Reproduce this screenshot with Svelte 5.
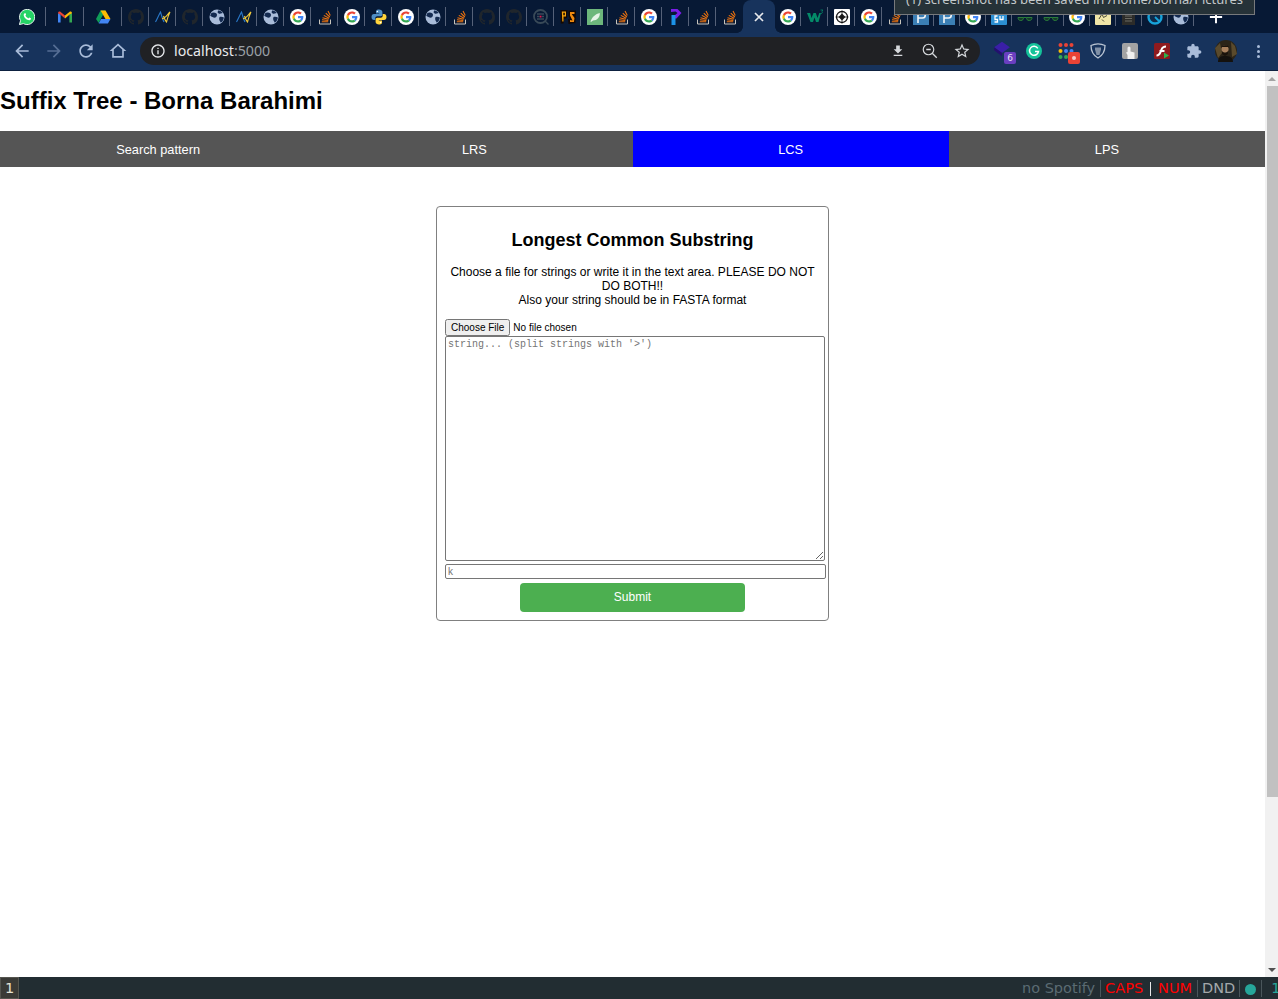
<script>
  const tabs = [
    ['whatsapp',38],['gmail',38],['drive',38],['github',27],['nu',27],['github',27],['globe',27],['nu',27],['globe',27],['google',27],
    ['so',27],['google',27],['python',27],['google',27],['globe',27],['so',27],['github',27],['github',27],['quant',27],['ps',27],
    ['leaf',27],['so',27],['google',27],['purple',27],['so',27],['so',27],['active',32,true],['google',26],['w3',27],['cube',27],
    ['google',27],['so',26],['p',26],['p',26],['google',26],['gu',26],['glasses',26],['glasses',26],['google',26],['note',26],
    ['doc',26],['ring',26],['globe',26]
  ];
  const tabItems = tabs.map(([kind, width, active]) => ({ kind, width, active }));
</script>

{#snippet favicon(kind)}
  {#if kind === 'active'}
    <svg class="fav" viewBox="0 0 16 16"><path d="M4 4l8 8M12 4l-8 8" stroke="#e8eaed" stroke-width="1.700" fill="none"/></svg>
  {:else if kind === 'whatsapp'}
    <svg class="fav" viewBox="0 0 16 16"><path d="M.4 15.600l1.100-3.900A7.600 7.600 0 1 1 4.400 14.600z" fill="#25d366" stroke="#fff" stroke-width=".9"/><path d="M5.700 4.200c-.9.5-1.200 1.600-.8 2.700.7 2 2.200 3.400 4.200 4.200 1.100.4 2.300 0 2.700-.9.2-.5.2-.9.1-1l-1.700-.8-.8 1c-1.300-.5-2.300-1.400-3-2.800l.7-.8-.7-1.800z" fill="#fff"/></svg>
  {:else if kind === 'gmail'}
    <svg class="fav" viewBox="0 0 16 16"><path d="M1 13.500V4l2.600 1.700v7.800z" fill="#4285f4"/><path d="M12.400 13.500V5.700L15 4v9.500z" fill="#34a853"/><path d="M1 4.200C1 2.800 2.500 2 3.600 2.900L8 6.400l-.1 3-4.300-3.600z" fill="#ea4335"/><path d="M8 6.400l4.400-3.500c1.100-.9 2.600-.1 2.600 1.300l-2.600 1.600L8 9.400z" fill="#fbbc05"/></svg>
  {:else if kind === 'drive'}
    <svg class="fav" viewBox="0 0 16 16"><path d="M5.500 1.500h5L6 9.500l-2.300 4.500L1 10z" fill="#0f9d58"/><path d="M5.500 1.500h5l5 8.500h-5z" fill="#fbbc04"/><path d="M3.700 14.500L6 10h9.500l-2.600 4.500z" fill="#4285f4"/></svg>
  {:else if kind === 'github'}
    <svg class="fav" viewBox="0 0 16 16"><path d="M8 0C3.580 0 0 3.580 0 8c0 3.540 2.290 6.530 5.470 7.590.4.070.55-.17.55-.38 0-.19-.01-.82-.01-1.490-2.010.37-2.530-.49-2.690-.94-.09-.23-.48-.94-.82-1.130-.28-.15-.68-.52-.01-.53.63-.01 1.080.58 1.230.82.72 1.210 1.870.87 2.330.66.07-.52.28-.87.51-1.070-1.780-.2-3.640-.89-3.640-3.950 0-.87.31-1.590.82-2.150-.08-.2-.36-1.020.08-2.120 0 0 .67-.21 2.200.82.64-.18 1.320-.27 2-.27.68 0 1.360.09 2 .27 1.530-1.040 2.200-.82 2.200-.82.44 1.100.16 1.920.08 2.120.51.56.82 1.270.82 2.150 0 3.070-1.870 3.750-3.650 3.950.29.25.54.73.54 1.480 0 1.070-.01 1.930-.01 2.200 0 .21.15.46.55.38A8.013 8.013 0 0 0 16 8c0-4.420-3.580-8-8-8z" fill="#20262c"/></svg>
  {:else if kind === 'nu'}
    <svg class="fav" viewBox="0 0 16 16"><path d="M.5 13C2.500 9.500 4 5.500 5.500 3c1 3.500 2 7 3.500 10" stroke="#2a78c8" stroke-width="1.100" fill="none"/><path d="M7 9.500C9.500 10.500 12 6 15 3c-1.500 3-2.500 6-3.500 10-1-1-2-3-3-6" stroke="#f0c93a" stroke-width="1.100" fill="none"/></svg>
  {:else if kind === 'globe'}
    <svg class="fav" viewBox="0 0 16 16"><circle cx="8" cy="8" r="7.500" fill="#a9bcd9"/><path d="M2.200 4.200C3.500 3 6 3.200 7.500 4.500 8.500 5.800 8 7.500 6.500 8.500 5 9 3 8 1.200 6.800zM9.500 1.200c1.800.4 3.300 1.400 4.300 2.800l-3 .8c-1 0-2-.8-2.300-1.800zM10.500 8c1.500-.5 3.300-.2 4.400.6-.2 2.300-1.400 4-3 5.100-1-1.200-2.500-3.500-1.400-5.700z" fill="#132a50"/></svg>
  {:else if kind === 'google'}
    <svg class="fav" viewBox="0 0 16 16"><circle cx="8" cy="8" r="8" fill="#fff"/><g transform="translate(2.400 2.400) scale(.233)"><path fill="#EA4335" d="M24 9.500c3.540 0 6.710 1.220 9.210 3.600l6.850-6.850C35.900 2.380 30.470 0 24 0 14.620 0 6.510 5.380 2.560 13.220l7.980 6.190C12.430 13.720 17.740 9.500 24 9.500z"/><path fill="#4285F4" d="M46.980 24.550c0-1.570-.15-3.090-.38-4.550H24v9.020h12.940c-.58 2.960-2.260 5.480-4.780 7.180l7.730 6c4.510-4.180 7.090-10.360 7.090-17.650z"/><path fill="#FBBC05" d="M10.530 28.590c-.48-1.450-.76-2.990-.76-4.590s.27-3.140.76-4.590l-7.980-6.190C.92 16.460 0 20.120 0 24c0 3.880.92 7.540 2.560 10.780l7.970-6.190z"/><path fill="#34A853" d="M24 48c6.480 0 11.930-2.130 15.890-5.810l-7.730-6c-2.150 1.450-4.920 2.300-8.160 2.300-6.260 0-11.570-4.220-13.470-9.910l-7.980 6.190C6.510 42.620 14.620 48 24 48z"/></g></svg>
  {:else if kind === 'so'}
    <svg class="fav" viewBox="0 0 16 16"><path d="M2.500 10.500v4.500h11v-4.500" stroke="#c8c4bc" stroke-width="1" fill="none"/><path d="M4.800 12.800h6.400M5 10.800l6.300.6M5.500 8.700l6.100 1.600M6.800 6.400l5.400 2.900M8.800 4.200l4 3.800M11 2l2.300 4.600" stroke="#f2740d" stroke-width="1.050" fill="none"/></svg>
  {:else if kind === 'python'}
    <svg class="fav" viewBox="0 0 16 16"><path d="M8 .5C5 .5 5 2 5 3v1.500h3.200V5H3C1.500 5 .5 6.200.5 8S1.500 11 3 11h1.300V9.200C4.300 8 5.200 7.300 6.300 7.300h3.400c1 0 1.700-.8 1.700-1.700V3c0-1.500-1.500-2.500-3.400-2.500z" fill="#4f8fc6"/><path d="M8 15.500c3 0 3-1.500 3-2.500v-1.500H7.800V11H13c1.500 0 2.500-1.200 2.500-3S14.500 5 13 5h-1.300v1.800c0 1.200-.9 1.900-2 1.900H6.300c-1 0-1.700.8-1.700 1.700V13c0 1.500 1.500 2.500 3.400 2.500z" fill="#ffd43b"/><circle cx="6.400" cy="2.500" r=".7" fill="#fff"/><circle cx="9.600" cy="13.500" r=".7" fill="#fff"/></svg>
  {:else if kind === 'quant'}
    <svg class="fav" viewBox="0 0 16 16"><circle cx="7.500" cy="7.500" r="6.500" fill="none" stroke="#394a58" stroke-width="1.800"/><path d="M4 5h7M4 7.500h2.500M9 7.500h2M4 10h7M12 12l3.500 3.500" stroke="#394a58" stroke-width="1.400"/><rect x="6.700" y="6.700" width="1.800" height="1.800" fill="#e8174a"/></svg>
  {:else if kind === 'ps'}
    <svg class="fav" viewBox="0 0 16 16"><path d="M.5 1h7l-.5 8-3 1-.5 4.500H.8zM8.500 1.500H16l-.5 12.500-7 1-.5-5 2 .5-1.500-4z" fill="#140802"/><path d="M1.800 2.500h4.200v5H3.500v5H2.300zM3.300 3.700v2.500h1.500V3.700z" fill="#f5a30c" fill-rule="evenodd"/><path d="M10 3h4.500v2h-2.800l2.800 4-.6 4H10v-2l2.500.5-2.500-5z" fill="#ef8a0e"/></svg>
  {:else if kind === 'leaf'}
    <svg class="fav" viewBox="0 0 16 16"><rect width="16" height="16" fill="#6db77c"/><path d="M3.500 12.500C5 8 8.500 5 12.800 4c.2 4.200-2.500 7.500-6.800 7.500l-2 1.500z" fill="#e6f3e8"/></svg>
  {:else if kind === 'purple'}
    <svg class="fav" viewBox="0 0 16 16"><path d="M3 0l6.500 0 4 4-5 5.500H6V7L9.500 4 7.500 2.500 3 3z" fill="#7a1de8"/><path d="M3.500 6h4v10h-4z" fill="#1c93e8"/></svg>
  {:else if kind === 'w3'}
    <svg class="fav" viewBox="0 0 16 16"><path d="M0 4h3.200l1.300 5L6.500 4h2.300l1.700 5L12.300 4h1.700l-2.500 9H9L7.500 8.500 6 13H3.500z" fill="#048a68"/><path d="M13.500 1H16l-1.200 1.200c1 .5.8 2.300-.8 2.300" stroke="#048a68" stroke-width=".8" fill="none"/></svg>
  {:else if kind === 'cube'}
    <svg class="fav" viewBox="0 0 16 16"><rect width="16" height="16" rx="1" fill="#fff"/><circle cx="8" cy="8" r="5.500" fill="none" stroke="#111" stroke-width="1.300"/><path d="M8 4.500L11.500 8 8 11.500 4.500 8z" fill="#222"/><path d="M8 1.500v13M1.500 8h13" stroke="#111" stroke-width=".7"/></svg>
  {:else if kind === 'p'}
    <svg class="fav" viewBox="0 0 16 16"><rect width="16" height="16" fill="#3b7fb5"/><path d="M5 14V3.500h4.500a2.700 2.700 0 0 1 0 5.500H5" fill="none" stroke="#f3f6f8" stroke-width="1.600"/></svg>
  {:else if kind === 'gu'}
    <svg class="fav" viewBox="0 0 16 16"><rect width="16" height="16" rx="1" fill="#2b8fd3"/><path d="M6.500 7H4v3.500h2.500v2.500H3.500M9 7v3.500h3V7" fill="none" stroke="#fff" stroke-width="1.300"/></svg>
  {:else if kind === 'glasses'}
    <svg class="fav" viewBox="0 0 16 16"><path d="M1 8.500h5.500c0 2-1 3-2.700 3S1 10.500 1 8.500zM9.500 8.500H15c0 2-1 3-2.800 3s-2.700-1-2.700-3zM6.500 8.500h3" fill="#173a2a" stroke="#2b7d3a" stroke-width="1"/></svg>
  {:else if kind === 'note'}
    <svg class="fav" viewBox="0 0 16 16"><rect width="16" height="16" rx="1" fill="#f0e6a8"/><path d="M4 10l3-5 1.500 3.500L12 6.500M7 10.500l2 2" stroke="#4a4a3a" stroke-width="1" fill="none"/></svg>
  {:else if kind === 'doc'}
    <svg class="fav" viewBox="0 0 16 16"><rect x="1" width="13" height="16" fill="#2c2c29"/><path d="M4 7h7M4 9.500h7M4 12h7" stroke="#6b6b62" stroke-width="1"/></svg>
  {:else if kind === 'ring'}
    <svg class="fav" viewBox="0 0 16 16"><circle cx="8" cy="8" r="6.500" fill="#0f2a49" stroke="#17a3da" stroke-width="2.400"/><path d="M8 8l4 4" stroke="#17a3da" stroke-width="1.800"/></svg>
  {/if}
{/snippet}

<div class="screen">
  <header class="chrome">
    <div class="tabstrip">
      {#each tabItems as tab}
        <div class={['tab', tab.active && 'active', `w${tab.width}`]}>
          {@render favicon(tab.kind)}
        </div>
      {/each}
      <svg class="newtab" viewBox="0 0 16 16"><path d="M8 1v14M1 8h14" stroke="#fff" stroke-width="2.200"/></svg>
    </div>
    <div class="toast">(1) screenshot has been saved in /home/borna/Pictures</div>

    <div class="toolbar">
      <div class="navbtn"><svg viewBox="0 0 24 24"><path class="nav" d="M20 11H7.830l5.590-5.590L12 4l-8 8 8 8 1.410-1.410L7.830 13H20v-2z"/></svg></div>
      <div class="navbtn"><svg viewBox="0 0 24 24"><path class="navoff" d="M4 11h12.170l-5.590-5.590L12 4l8 8-8 8-1.410-1.410L16.170 13H4v-2z"/></svg></div>
      <div class="navbtn"><svg viewBox="0 0 24 24"><path class="nav" d="M17.650 6.350C16.200 4.900 14.210 4 12 4c-4.420 0-7.990 3.580-7.990 8s3.570 8 7.990 8c3.730 0 6.840-2.550 7.730-6h-2.080c-.82 2.330-3.040 4-5.650 4-3.310 0-6-2.690-6-6s2.690-6 6-6c1.660 0 3.140.69 4.220 1.780L13 11h7V4l-2.350 2.350z"/></svg></div>
      <div class="navbtn"><svg viewBox="0 0 24 24"><path class="nav" d="M12 5.690l5 4.500V18H7v-7.810l5-4.500M12 3L2 12h3v8h14v-8h3L12 3z"/></svg></div>

      <div class="omnibox">
        <svg class="info" viewBox="0 0 24 24"><path fill="#e8eaed" d="M11 7h2v2h-2zm0 4h2v6h-2zm1-9C6.480 2 2 6.480 2 12s4.480 10 10 10 10-4.480 10-10S17.520 2 12 2zm0 18c-4.410 0-8-3.590-8-8s3.590-8 8-8 8 3.590 8 8-3.590 8-8 8z"/></svg>
        <span class="url">localhost<span class="port">:5000</span></span>
        <div class="omni-actions">
          <svg class="dl" viewBox="0 0 24 24"><path fill="#d5d8dc" d="M19 9h-4V3H9v6H5l7 7 7-7zM5 18v2h14v-2H5z"/></svg>
          <svg viewBox="0 0 24 24"><circle cx="10" cy="10" r="7" fill="none" stroke="#d5d8dc" stroke-width="1.600"/><path d="M7 10h6M15 15l6 6" stroke="#d5d8dc" stroke-width="1.800" fill="none"/></svg>
          <svg viewBox="0 0 24 24"><path fill="#d5d8dc" d="M22 9.240l-7.190-.62L12 2 9.190 8.630 2 9.240l5.460 4.730L5.820 21 12 17.270 18.180 21l-1.630-7.030L22 9.240zM12 15.400l-3.760 2.270 1-4.280-3.320-2.880 4.380-.38L12 6.100l1.710 4.040 4.380.38-3.320 2.880 1 4.280L12 15.400z"/></svg>
        </div>
      </div>

      <div class="exts">
        <div class="ext">
          <svg class="stack" viewBox="0 0 16 16"><path d="M8 1.500l7 5-7 5-7-5z" fill="#3a1fa8"/><path d="M1 6.500v2.500l7 5.500v-3z" fill="#241070"/></svg>
          <span class="badge">6</span>
        </div>
        <div class="ext"><svg viewBox="0 0 16 16"><circle cx="8" cy="8" r="8" fill="#15c39a"/><path d="M11.800 5.300A4.500 4.500 0 1 0 12.500 8.500H9" fill="none" stroke="#fff" stroke-width="1.500"/></svg></div>
        <div class="ext">
          <svg viewBox="0 0 16 16"><circle cx="2.500" cy="2" r="2" fill="#ea4335"/><circle cx="8" cy="2" r="2" fill="#ea4335"/><circle cx="13.500" cy="2" r="2" fill="#ea4335"/><circle cx="2.500" cy="8" r="2" fill="#fbbc05"/><circle cx="8" cy="8" r="2" fill="#4285f4"/><circle cx="13.500" cy="8" r="2" fill="#4285f4"/><circle cx="2.500" cy="14" r="2" fill="#34a853"/><circle cx="8" cy="14" r="2" fill="#34a853"/></svg>
          <span class="redbadge"></span>
        </div>
        <div class="ext"><svg viewBox="0 0 16 16"><path d="M1 2.500C5 .5 11 .5 15 2.500 15 8 12.500 12.500 8 15 3.500 12.500 1 8 1 2.500z" fill="none" stroke="#b9c4d2" stroke-width="1.300"/><path d="M5 4.500h6v2L9.500 12h-3L5 6.500z" fill="#8090a6"/></svg></div>
        <div class="ext"><svg viewBox="0 0 16 16"><rect width="16" height="16" rx="2" fill="#a3a3a3"/><path d="M5.500 16v-4L4 9.500l1.500-.5V5a1.500 1.500 0 0 1 3 0v3.500l4 1V16z" fill="#f0f0f0"/></svg></div>
        <div class="ext"><svg viewBox="0 0 16 16"><rect width="16" height="16" rx="1.500" fill="#8f1a1e"/><path d="M2.500 12.500C6 12.500 6.500 9 7.500 6.500 8.300 4.500 9.500 3.500 12 3.500M5.500 8h5" fill="none" stroke="#fff" stroke-width="2"/><path d="M10 9.500l5 3-5 3z" fill="#2fb34a"/></svg></div>
        <div class="ext"><svg viewBox="0 0 24 24"><path fill="#a9bcd9" d="M20.500 11H19V7c0-1.100-.9-2-2-2h-4V3.500C13 2.120 11.880 1 10.500 1S8 2.120 8 3.500V5H4c-1.100 0-1.990.9-1.990 2v3.800H3.500c1.490 0 2.700 1.210 2.700 2.700s-1.210 2.700-2.700 2.700H2V20c0 1.100.9 2 2 2h3.800v-1.500c0-1.490 1.210-2.700 2.700-2.700 1.490 0 2.700 1.210 2.700 2.700V22H17c1.100 0 2-.9 2-2v-4h1.500c1.380 0 2.500-1.120 2.500-2.500S21.880 11 20.500 11z"/></svg></div>
        <div class="ext avatar"><svg viewBox="0 0 22 22"><circle cx="11" cy="11" r="11" fill="#2b2418"/><path d="M0 8l5-5 2 10-4 5zM16 2l4 4 2 8-5 3z" fill="#5a4a2c"/><circle cx="10" cy="9" r="3.600" fill="#a8805c"/><path d="M6 8c0-3 8-4 8 0l-1-1H7zM7.500 11c1 3 4 3 5 0l.5 3-3 2-3-2z" fill="#1a120a"/><path d="M3 22c0-5 3-6 7-6s8 1 8 6z" fill="#14110d"/></svg></div>
        <div class="dots"><span></span><span></span><span></span></div>
      </div>
    </div>
  </header>

  <div class="viewport">
    <main class="page">
      <h1>Suffix Tree - Borna Barahimi</h1>
      <nav>
        <button>Search pattern</button>
        <button>LRS</button>
        <button class="current">LCS</button>
        <button>LPS</button>
      </nav>
      <form class="card" onsubmit={(e) => e.preventDefault()}>
        <h3>Longest Common Substring</h3>
        <p>Choose a file for strings or write it in the text area. PLEASE DO NOT DO BOTH!!<br />Also your string should be in FASTA format</p>
        <input class="file" type="file" />
        <textarea placeholder="string... (split strings with '>')"></textarea>
        <input class="k" type="text" placeholder="k" />
        <button class="submit" type="submit">Submit</button>
      </form>
    </main>
    <div class="scrollbar">
      <span class="arrow up"></span>
      <div class="track"><div class="thumb"></div></div>
      <span class="arrow down"></span>
    </div>
  </div>

  <footer class="status">
    <span class="workspace">1</span>
    <div class="blocks">
      <span class="muted">no Spotify</span>
      <span class="sep caps">CAPS</span>
      <span class="pipe"></span>
      <span class="num">NUM</span>
      <span class="sep dnd">DND</span>
      <span class="sep dotcell"><i class="dot"></i></span>
      <span class="sep teal">1</span>
    </div>
  </footer>
</div>

<style>
  :global(body) { margin: 0; overflow: hidden; background: #fff; }
  .screen { width: 1278px; height: 999px; display: flex; flex-direction: column; overflow: hidden; font-family: "Liberation Sans", Arial, sans-serif; }

  .chrome { position: relative; flex: none; }
  .tabstrip { height: 33px; background: #071935; display: flex; padding-left: 8px; box-sizing: border-box; overflow: hidden; }
  .tab { height: 33px; position: relative; display: flex; align-items: center; justify-content: center; flex: none; box-sizing: border-box; }
  .tab::after { content: ""; position: absolute; right: 0; top: 7px; width: 1px; height: 19px; background: #556178; }
  .tab:has(+ .active)::after { display: none; }
  .w38 { width: 38px; }
  .w27 { width: 27px; }
  .w26 { width: 26px; }
  .w32 { width: 32px; }
  .tab.active { background: #17335c; border-radius: 8px 8px 0 0; z-index: 1; }
  .tab.active::before, .tab.active::after { content: ""; display: block; position: absolute; bottom: 0; top: auto; width: 6px; height: 6px; background: radial-gradient(circle at 0 0, transparent 5.500px, #17335c 6px); }
  .tab.active::before { left: -6px; }
  .tab.active::after { right: -6px; background: radial-gradient(circle at 100% 0, transparent 5.500px, #17335c 6px); }
  .fav { width: 16px; height: 16px; flex: none; }
  .newtab { width: 14px; height: 14px; margin-left: 15px; align-self: center; flex: none; }
  .toast { position: absolute; left: 894px; top: -6px; width: 361px; height: 21px; box-sizing: border-box; background: #263238; border: 1px solid #77797c; color: #c3c8ca; font: 13px/9px "Noto Sans", sans-serif; text-align: center; white-space: nowrap; overflow: hidden; z-index: 2; }

  .toolbar { height: 38px; background: #17335c; border-bottom: 1px solid #0d2140; display: flex; align-items: center; padding: 0 0 1px 6px; box-sizing: border-box; }
  .navbtn { width: 32px; height: 32px; display: flex; align-items: center; justify-content: center; flex: none; }
  .navbtn svg { width: 20px; height: 20px; }
  .nav { fill: #a9bcd9; }
  .navoff { fill: #566e94; }
  .omnibox { margin-left: 6px; width: 840px; height: 28px; border-radius: 14px; background: #202124; display: flex; align-items: center; flex: none; }
  .info { width: 16px; height: 16px; margin-left: 10px; }
  .url { margin: 0 0 2px 8px; font: 14.200px "Noto Sans", sans-serif; color: #e8eaed; }
  .port { color: #9aa0a6; }
  .omni-actions { margin-left: auto; display: flex; gap: 14px; padding-right: 9px; }
  .omni-actions svg { width: 18px; height: 18px; }
  .omni-actions .dl { transform: scale(.82); }
  .exts { margin-left: 6px; display: flex; align-items: center; }
  .ext { width: 32px; height: 32px; position: relative; display: flex; align-items: center; justify-content: center; flex: none; }
  .ext svg { width: 16px; height: 16px; }
  .ext .stack { width: 18px; height: 18px; margin-top: -4px; }
  .avatar svg { width: 22px; height: 22px; }
  .badge { position: absolute; right: 2px; bottom: 3px; width: 12px; height: 12px; background: #6a3fc0; border-radius: 2px; color: #e8e0f8; font: 9px/12px "DejaVu Sans", sans-serif; text-align: center; }
  .redbadge { position: absolute; right: 2px; bottom: 3px; width: 12px; height: 12px; background: #ea4335; border-radius: 2px; }
  .redbadge::after { content: ""; position: absolute; left: 4px; top: 4px; width: 4px; height: 4px; border-radius: 50%; background: #f9c8c4; }
  .dots { width: 32px; display: flex; flex-direction: column; align-items: center; gap: 2px; }
  .dots span { width: 3px; height: 3px; border-radius: 50%; background: #a9bcd9; }

  .viewport { flex: 1; min-height: 0; display: flex; background: #fff; }
  .page { flex: 1; min-width: 0; }
  h1 { margin: 16px 0; font-size: 24px; line-height: 28px; font-weight: 700; color: #000; }
  nav { display: flex; background: #555; height: 36px; }
  nav button { flex: 1; border: 0; background: #555; color: #fff; font: 12.800px "Liberation Sans", Arial, sans-serif; padding: 0; }
  nav button.current { background: #00f; }
  .card { width: 393px; height: 415px; margin: 39px auto 0; box-sizing: border-box; border: 1px solid #808080; border-radius: 4px; padding: 0 8px; display: flex; flex-direction: column; align-items: flex-start; }
  h3 { align-self: stretch; margin: 22px 0 0; font-size: 18px; line-height: 22px; font-weight: 700; text-align: center; color: #000; }
  p { align-self: stretch; margin: 14px 0 0; font-size: 12px; line-height: 14px; text-align: center; color: #000; }
  .file { margin-top: 12px; height: 17px; font: 10px "Liberation Sans", Arial, sans-serif; width: 200px; padding: 0; }
  .file::file-selector-button { padding: 1px 4px; margin-right: 3px; }
  textarea { width: 380px; height: 225px; box-sizing: border-box; margin: 0; padding: 2px; border: 1px solid #767676; border-radius: 2px; font: 10px "Liberation Mono", monospace; flex: none; }
  .k { width: 381px; height: 15px; box-sizing: border-box; margin: 3px 0 0; padding: 1px 2px; border: 1px solid #767676; border-radius: 2px; font: 10px "Liberation Sans", Arial, sans-serif; flex: none; }
  .submit { align-self: center; margin-top: 4px; width: 225px; height: 29px; padding: 0 0 2px; border: 0; border-radius: 4px; background: #4caf50; color: #fff; font: 12px "Liberation Sans", Arial, sans-serif; flex: none; }

  .scrollbar { width: 13px; flex: none; background: #f1f1f1; display: flex; flex-direction: column; align-items: center; }
  .arrow { width: 0; height: 0; border-left: 4px solid transparent; border-right: 4px solid transparent; flex: none; }
  .arrow.up { margin: 6px 0 5px; border-bottom: 4px solid #a3a3a3; }
  .arrow.down { margin: 5px 0 5px; border-top: 4px solid #505050; }
  .track { flex: 1; align-self: stretch; display: flex; flex-direction: column; padding-left: 2px; }
  .thumb { height: 711px; background: #c1c1c1; }

  .status { height: 22px; flex: none; background: #222d32; display: flex; align-items: stretch; font: 14.500px/23px "DejaVu Sans", sans-serif; overflow: hidden; position: relative; }
  .workspace { width: 19px; box-sizing: border-box; background: #3a3a36; border: 1px solid #55554f; color: #e6e3d3; text-align: center; line-height: 21px; }
  .blocks { position: absolute; left: 1022px; top: 0; display: flex; white-space: nowrap; }
  .muted { color: #5b6b72; }
  .caps, .num { color: #ff0000; }
  .dnd { color: #a3a8aa; margin-left: 4px; }
  .teal { color: #26a69a; }
  .sep { position: relative; margin-left: 5px; padding-left: 5px; }
  .sep::before { content: ""; position: absolute; left: 0; top: 3px; bottom: 3px; width: 1px; background: #4a565b; }
  .pipe { width: 1px; height: 14px; background: #e8e8e8; margin: 5px 7px 0 7px; }
  .dotcell { display: flex; align-items: center; margin-left: 4px; padding-left: 6px; }
  .dot { display: block; width: 11px; height: 11px; border-radius: 50%; background: #26a69a; margin-top: 1px; }
  .teal.sep { padding-left: 10px; }
</style>
